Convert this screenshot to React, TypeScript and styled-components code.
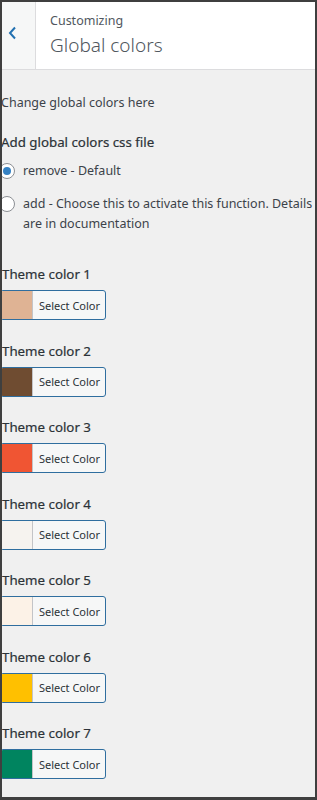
import React from "react";
import styled, { createGlobalStyle } from "styled-components";

const GlobalStyle = createGlobalStyle`
  html, body {
    margin: 0;
    padding: 0;
    background: #f0f0f0;
  }
  body {
    font-family: "Noto Sans", "Open Sans", sans-serif;
    color: #3c434a;
  }
`;

// Outer frame of the customizer panel
const Frame = styled.div`
  width: 317px;
  height: 800px;
  box-sizing: border-box;
  border: 2px solid #3f3f3f;
  border-bottom-width: 3px;
  background: #f0f0f0;
  overflow: hidden;
  display: flex;
  flex-direction: column;
`;

const Header = styled.header`
  display: flex;
  height: 67px;
  flex-shrink: 0;
  background: #fff;
  border-bottom: 1px solid #dcdcde;
`;

const BackButton = styled.button`
  width: 34px;
  padding: 0 0 6px 6px;
  border: 0;
  border-right: 1px solid #dcdcde;
  background: #f6f7f7;
  display: flex;
  align-items: center;
  justify-content: flex-start;
  svg {
    display: block;
  }
`;

const Title = styled.div`
  padding: 10px 0 0 14px;
  color: #50575e;
  .sub {
    font-size: 12.5px;
    line-height: 18px;
  }
  .main {
    font-size: 19px;
    font-weight: 300;
    line-height: 28px;
    margin-top: 1px;
  }
`;

const Content = styled.div`
  margin-left: -1px;
  padding-top: 24px;
`;

const Intro = styled.p`
  margin: 0 0 20px;
  font-size: 12.5px;
  line-height: 18px;
`;

const ControlTitle = styled.div`
  font-size: 13.3px;
  font-weight: 400;
  line-height: 21px;
  color: #2c3338;
  -webkit-text-stroke: 0.2px #2c3338;
`;

const RadioRow = styled.label<{ $top: number }>`
  display: flex;
  align-items: flex-start;
  gap: 8px;
  margin-left: -2px;
  margin-top: ${(p) => p.$top}px;
  font-size: 12.5px;
  line-height: 20px;
`;

const RadioDot = styled.span<{ $checked?: boolean }>`
  flex-shrink: 0;
  width: 16px;
  height: 16px;
  margin-top: 2px;
  box-sizing: border-box;
  border-radius: 50%;
  border: 1px solid #8c8f94;
  background: #fff;
  display: flex;
  align-items: center;
  justify-content: center;
  &::after {
    content: "";
    width: 8px;
    height: 8px;
    border-radius: 50%;
    background: #3582c4;
    display: ${(p) => (p.$checked ? "block" : "none")};
  }
`;

const ColorList = styled.div`
  margin-top: 30px;
  display: flex;
  flex-direction: column;
  gap: 20.5px;
`;

const ColorControl = styled.div`
  display: flex;
  flex-direction: column;
  gap: 5px;
  padding-left: 1px;
`;

const PickerButton = styled.button`
  display: flex;
  align-items: stretch;
  width: 106px;
  height: 30px;
  margin-left: -2px;
  padding: 0;
  box-sizing: border-box;
  border: 1px solid #2f6e9f;
  border-radius: 3px;
  background: #f6f7f7;
  overflow: hidden;
  font-family: "Noto Sans", "Open Sans", sans-serif;
  font-size: 11px;
  color: #2c3338;
  cursor: pointer;
`;

const Swatch = styled.span<{ $color: string }>`
  width: 31px;
  background: ${(p) => p.$color};
  border-right: 1px solid #c3c4c7;
`;

const PickerLabel = styled.span`
  flex: 1;
  display: flex;
  align-items: center;
  padding-left: 6px;
`;

const themeColors = [
  "#dfb394",
  "#6f4c31",
  "#f05533",
  "#f6f3ef",
  "#fcf2e7",
  "#ffc000",
  "#00845f",
];

const App: React.FC = () => {
  return (
    <>
      <GlobalStyle />
      <Frame>
        <Header>
          <BackButton aria-label="Back">
            <svg width="9" height="14" viewBox="0 0 9 14">
              <path
                d="M7 1.5 L2 7 L7 12.5"
                fill="none"
                stroke="#2271b1"
                strokeWidth="2"
              />
            </svg>
          </BackButton>
          <Title>
            <div className="sub">Customizing</div>
            <div className="main">Global colors</div>
          </Title>
        </Header>

        <Content>
          <Intro>Change global colors here</Intro>
          <ControlTitle>Add global colors css file</ControlTitle>
          <RadioRow $top={8}>
            <RadioDot $checked />
            <span>remove - Default</span>
          </RadioRow>
          <RadioRow $top={13}>
            <RadioDot />
            <span>add - Choose this to activate this function. Details are in documentation</span>
          </RadioRow>

          <ColorList>
            {themeColors.map((color, i) => (
              <ColorControl key={i}>
                <ControlTitle>Theme color {i + 1}</ControlTitle>
                <PickerButton>
                  <Swatch $color={color} />
                  <PickerLabel>Select Color</PickerLabel>
                </PickerButton>
              </ColorControl>
            ))}
          </ColorList>
        </Content>
      </Frame>
    </>
  );
};

export default App;
